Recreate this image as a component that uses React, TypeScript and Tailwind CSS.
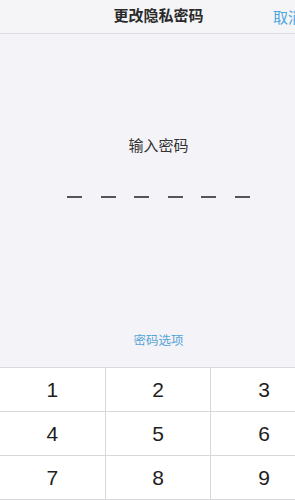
import React from "react";

const font = '"Helvetica Neue", "Liberation Sans", "Noto Sans CJK SC", sans-serif';

export default function App() {
  const keys = ["1", "2", "3", "4", "5", "6", "7", "8", "9", "", "0", ""];
  return (
    <div className="w-[295px] h-[500px] overflow-hidden bg-[#f4f3f7]" style={{ fontFamily: font }}>
      <div className="w-[317px] flex flex-col">
        <div className="h-[34px] bg-[#f5f5f7] border-b border-[#dcdce0] relative flex items-center justify-center">
          <span className="text-[15px] font-semibold text-[#2a2a2a] tracking-[0px]">更改隐私密码</span>
          <span className="absolute left-[273px] top-[7px] text-[15px] text-[#4ea5dc]">取消</span>
        </div>
        <div className="h-[333px] flex flex-col items-center">
          <div className="mt-[103px] text-[15px] text-[#333] leading-[18px]">输入密码</div>
          <div className="mt-[41px] flex gap-[18.6px]">
            {Array.from({ length: 6 }).map((_, i) => (
              <div key={i} className="w-[15px] h-[2px] bg-[#555]" />
            ))}
          </div>
          <div className="mt-[136px] text-[12.5px] text-[#56a5d8] leading-[14px]">密码选项</div>
        </div>
        <div className="grid grid-cols-3 bg-white border-t border-[#d8d8dc]">
          {keys.map((k, i) => (
            <div
              key={i}
              className={`h-[44px] flex items-center justify-center text-[21px] text-[#1e1e1e] border-b border-[#d8d8dc] ${i % 3 !== 2 ? "border-r" : ""}`}
            >
              {k}
            </div>
          ))}
        </div>
      </div>
    </div>
  );
}
